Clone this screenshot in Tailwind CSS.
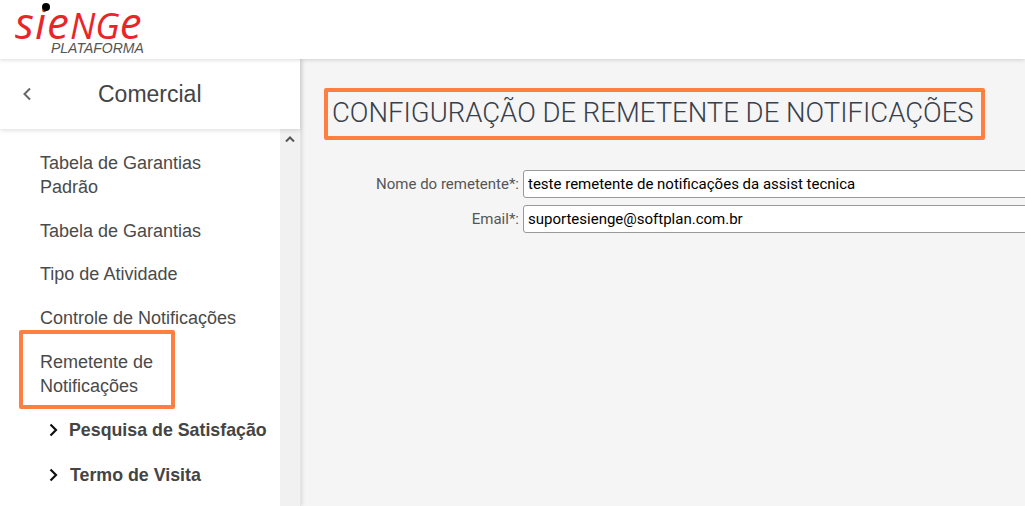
<!DOCTYPE html>
<html lang="pt-BR">
<head>
    <meta charset="UTF-8">
    <meta name="viewport" content="width=device-width, initial-scale=1.0">
    <title>Sienge Plataforma - Remetente de Notificações</title>
    <script src="https://cdn.jsdelivr.net/npm/@tailwindcss/browser@4"></script>
</head>
<body class="h-screen overflow-hidden bg-[#f5f5f5] font-['Liberation_Sans',sans-serif]">

    <header class="relative z-20 h-[59px] bg-white shadow-[0_1px_4px_rgba(0,0,0,0.15)] pl-[15px]">
        <div class="relative w-[140px] h-[59px]">
            <span class="absolute left-0 top-0 font-['Open_Sans',sans-serif] italic font-medium text-[44px] leading-[38px] tracking-[1px] text-[#e8262a]">sie<span class="[font-variant:small-caps] text-[52px] leading-[38px] tracking-[0px]">ng</span>e</span>
            <span class="absolute left-[27px] top-[3px] w-[8px] h-[8px] rounded-full bg-black"></span>
            <span class="absolute left-[36px] top-[41px] font-['Liberation_Sans',sans-serif] italic text-[14px] leading-[14px] text-[#555]">PLATAFORMA</span>
        </div>
    </header>

    <div class="flex h-[447px]">
        <aside class="w-[301px] shrink-0 flex flex-col bg-white border-r border-[#e4e4e4] shadow-[1px_0_4px_rgba(0,0,0,0.12)] z-10">
            <div class="relative z-10 h-[70px] shrink-0 flex items-center bg-white shadow-[0_1px_5px_rgba(0,0,0,0.15)]">
                <svg class="ml-[22px] w-[10px] h-[14px]" viewBox="0 0 10 14" fill="none" stroke="#666" stroke-width="2">
                    <path d="M8 1.5 2.5 7 8 12.5"/>
                </svg>
                <h2 class="ml-[66px] text-[23px] text-[#444]">Comercial</h2>
            </div>
            <div class="flex flex-1 min-h-0">
                <nav class="w-[280px] pt-[22px] text-[18px] leading-[24px] text-[#4a4a4a]">
                    <a class="block pl-10 pr-6 pb-[19.5px]">Tabela de Garantias Padrão</a>
                    <a class="block pl-10 pb-[19.5px]">Tabela de Garantias</a>
                    <a class="block pl-10 pb-[19.5px]">Tipo de Atividade</a>
                    <a class="block pl-10 pb-[20.5px]">Controle de Notificações</a>
                    <a class="relative block pl-10 pr-[120px] pb-[20px]">Remetente de Notificações
                        <span class="absolute left-[19px] top-[-20px] w-[156px] h-[79px] border-4 border-[#ff7f41] rounded-[2px]"></span>
                    </a>
                    <a class="flex items-center pl-[49px] pb-[21px] text-[17.8px] font-bold text-[#444]">
                        <svg class="w-[10px] h-[16px] mr-[10px]" viewBox="0 0 10 16" fill="none" stroke="#111" stroke-width="2.2"><path d="M1.5 2.5 7 8 1.5 13.5"/></svg>
                        Pesquisa de Satisfação
                    </a>
                    <a class="flex items-center pl-[49px] text-[17.8px] font-bold text-[#444]">
                        <svg class="w-[10px] h-[16px] mr-[11px]" viewBox="0 0 10 16" fill="none" stroke="#111" stroke-width="2.2"><path d="M1.5 2.5 7 8 1.5 13.5"/></svg>
                        Termo de Visita
                    </a>
                </nav>
                <div class="w-5 bg-[#f1f1f1] flex justify-center pt-[7px]">
                    <svg class="w-[10px] h-[6px]" viewBox="0 0 10 6" fill="none" stroke="#555" stroke-width="2"><path d="M1 5.5 5 1.5 9 5.5"/></svg>
                </div>
            </div>
        </aside>

        <main class="flex-1 min-w-0 overflow-hidden font-['Roboto',sans-serif]">
            <div class="mt-[29px] ml-[23px] w-[661px] h-[52px] flex items-center pl-[4px] pb-[3px] border-4 border-[#ff7f41] rounded-[2px]">
                <h1 class="whitespace-nowrap text-[27.5px] font-light text-[#37404a]">CONFIGURAÇÃO DE REMETENTE DE NOTIFICAÇÕES</h1>
            </div>
            <form class="mt-[30px] flex flex-col gap-[7px]">
                <div class="flex items-center">
                    <label class="w-[222px] shrink-0 pr-1 text-right text-[15px] text-[#555]">Nome do remetente*:</label>
                    <input type="text" value="teste remetente de notificações da assist tecnica" class="w-[600px] h-7 shrink-0 px-1 bg-white border border-[#999] rounded-[3px] text-[15px] text-black">
                </div>
                <div class="flex items-center">
                    <label class="w-[222px] shrink-0 pr-1 text-right text-[15px] text-[#555]">Email*:</label>
                    <input type="text" value="suportesienge@softplan.com.br" class="w-[600px] h-7 shrink-0 px-1 bg-white border border-[#999] rounded-[3px] text-[15px] text-black">
                </div>
            </form>
        </main>
    </div>

</body>
</html>
